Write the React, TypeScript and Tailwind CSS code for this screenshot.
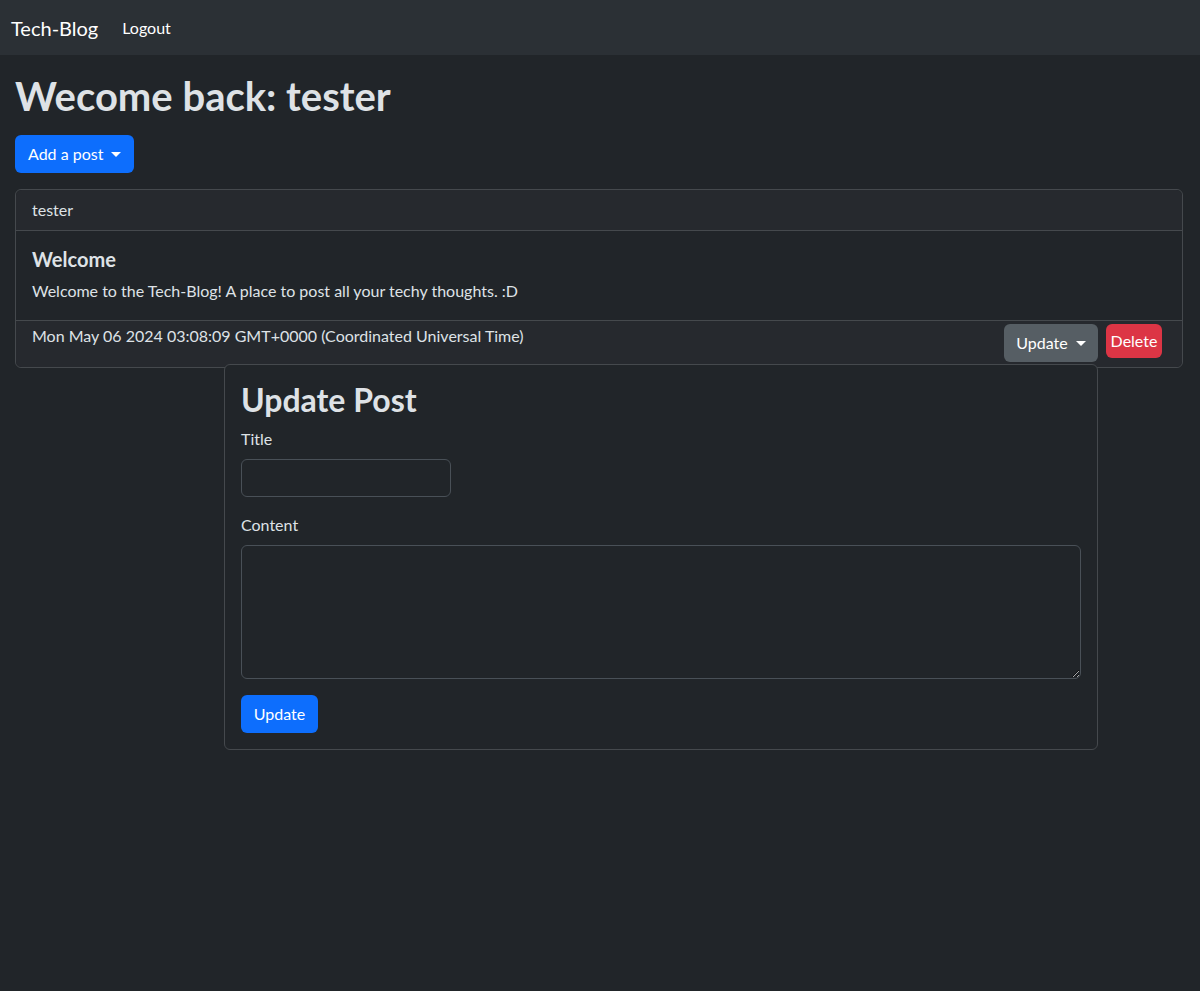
import React from 'react';

function Caret() {
  return (
    <span className="ml-[8px] inline-block h-0 w-0 border-x-[5px] border-t-[5px] border-x-transparent border-t-white align-[4px]" />
  );
}

export default function App() {
  return (
    <div className="min-h-[991px] bg-[#212529] text-[#dee2e6] font-['Lato','Liberation_Sans',sans-serif] text-base leading-6">
      <nav className="flex h-[55px] items-center bg-[#2b3035] px-[11px]">
        <a className="text-[20px] leading-[30px] text-white">Tech-Blog</a>
        <a className="ml-[24px] text-white">Logout</a>
      </nav>

      <main className="pl-[15px] pr-[17px] pt-[17px]">
        <h1 className="text-[40px] font-bold leading-[48px]">Wecome back: tester</h1>

        <button className="mt-[15px] flex h-[38px] items-center rounded-md bg-[#0d6efd] px-[13px] text-white">
          Add a post
          <Caret />
        </button>

        <div className="mt-[16px] rounded-md border border-[#45494d]">
          <div className="border-b border-[#45494d] bg-[#26292e] px-4 py-2 rounded-t-md">tester</div>
          <div className="px-4 pt-4 pb-[17px]">
            <h5 className="mb-2 text-[20px] font-bold leading-6">Welcome</h5>
            <p>Welcome to the Tech-Blog! A place to post all your techy thoughts. :D</p>
          </div>
          <div className="flex items-start justify-between border-t border-[#45494d] bg-[#26292e] pl-4 pr-[20px] pt-[3px] pb-[5px] rounded-b-md">
            <span>Mon May 06 2024 03:08:09 GMT+0000 (Coordinated Universal Time)</span>
            <div className="flex items-start gap-2">
              <div className="relative">
                <button className="flex h-[38px] w-[94px] items-center justify-center rounded-md bg-[#565e64] text-white">
                  Update
                  <Caret />
                </button>
                <div className="absolute right-0 top-full z-10 mt-[2px] w-[874px] rounded-md border border-[#45494d] bg-[#212529] p-4">
                  <h2 className="mb-2 text-[32px] font-bold leading-[38px]">Update Post</h2>
                  <label className="mb-2 block">Title</label>
                  <input className="mb-4 block h-[38px] w-[210px] rounded-md border border-[#495057] bg-[#212529] px-3 outline-none" />
                  <label className="mb-2 block">Content</label>
                  <textarea className="mb-4 block h-[134px] w-full rounded-md border border-[#495057] bg-[#212529] px-3 py-1.5 outline-none" />
                  <button className="h-[38px] w-[77px] rounded-md bg-[#0d6efd] text-white">Update</button>
                </div>
              </div>
              <button className="h-[34px] w-[56px] rounded-md bg-[#dc3545] text-white">Delete</button>
            </div>
          </div>
        </div>
      </main>
    </div>
  );
}
